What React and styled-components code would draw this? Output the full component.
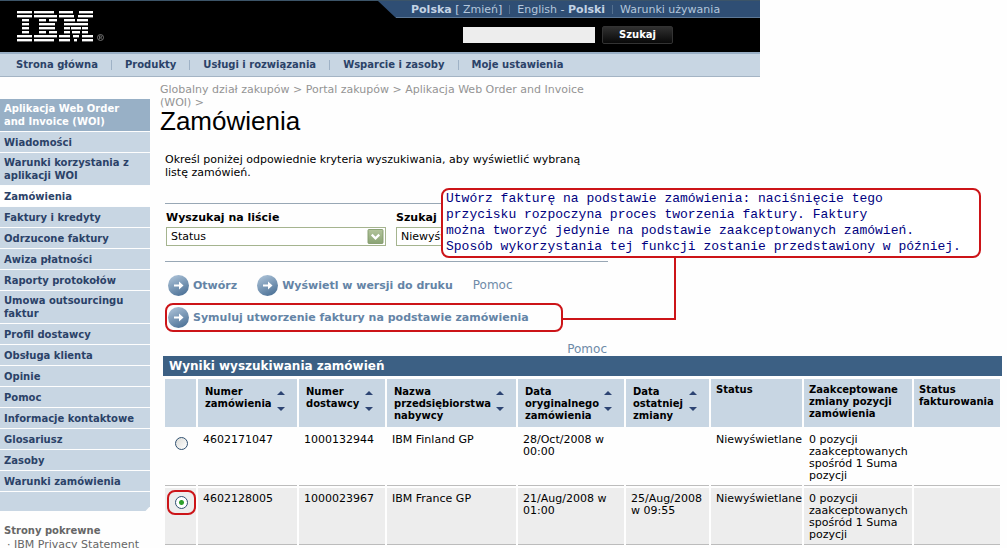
import React, { useState } from 'react';
import styled, { createGlobalStyle } from 'styled-components';

const navLinks = [
  'Strona główna',
  'Produkty',
  'Usługi i rozwiązania',
  'Wsparcie i zasoby',
  'Moje ustawienia',
];

const menuItems = [
  'Wiadomości',
  'Warunki korzystania z aplikacji WOI',
  'Zamówienia',
  'Faktury i kredyty',
  'Odrzucone faktury',
  'Awiza płatności',
  'Raporty protokołów',
  'Umowa outsourcingu faktur',
  'Profil dostawcy',
  'Obsługa klienta',
  'Opinie',
  'Pomoc',
  'Informacje kontaktowe',
  'Glosariusz',
  'Zasoby',
  'Warunki zamówienia',
];

const columns = [
  { width: 31, label: '' },
  { width: 99, label: 'Numer zamówienia', sortable: true },
  { width: 86, label: 'Numer dostawcy', sortable: true },
  { width: 129, label: 'Nazwa przedsiębiorstwa nabywcy', sortable: true },
  { width: 106, label: 'Data oryginalnego zamówienia', sortable: true },
  { width: 83, label: 'Data ostatniej zmiany', sortable: true },
  { width: 91, label: 'Status' },
  { width: 108, label: 'Zaakceptowane zmiany pozycji zamówienia' },
  { width: 86, label: 'Status fakturowania' },
];

const orders = [
  {
    id: '4602171047',
    supplier: '1000132944',
    buyer: 'IBM Finland GP',
    created: '28/Oct/2008 w 00:00',
    changed: '',
    status: 'Niewyświetlane',
    accepted: '0 pozycji zaakceptowanych spośród 1 Suma pozycji',
  },
  {
    id: '4602128005',
    supplier: '1000023967',
    buyer: 'IBM France GP',
    created: '21/Aug/2008 w 01:00',
    changed: '25/Aug/2008 w 09:55',
    status: 'Niewyświetlane',
    accepted: '0 pozycji zaakceptowanych spośród 1 Suma pozycji',
  },
];

// bars of the logo, one list of [x, width] per stripe
const logoStripes = [
  [[0, 15], [17, 20], [42, 14], [62, 14]],
  [[0, 15], [17, 23], [42, 15], [61, 15]],
  [[5, 7], [22, 7], [32, 8], [47, 11], [60, 11]],
  [[5, 7], [22, 16], [47, 24]],
  [[5, 7], [22, 16], [47, 6], [54, 10], [65, 6]],
  [[5, 7], [22, 7], [32, 8], [47, 6], [55, 8], [65, 6]],
  [[0, 15], [17, 23], [42, 11], [56, 6], [65, 11]],
  [[0, 15], [17, 20], [42, 11], [57, 3], [65, 11]],
];

function Logo() {
  return (
    <svg width="88" height="31" viewBox="0 0 88 31" role="img" aria-label="IBM">
      {logoStripes.map((bars, row) =>
        bars.map(([x, w]) => (
          <rect key={`${row}-${x}`} x={x} y={row * 4} width={w} height="2.4" fill="#fff" />
        ))
      )}
      <circle cx="83.5" cy="26.5" r="3" fill="none" stroke="#888" strokeWidth="0.8" />
      <path d="M82.5 28.3v-3.4h1.2a.9.9 0 0 1 0 1.9h-1.2m1.2 0 1 1.5" fill="none" stroke="#999" strokeWidth="0.6" />
    </svg>
  );
}

function ArrowIcon() {
  return (
    <svg width="21" height="21" viewBox="0 0 21 21" aria-hidden="true">
      <defs>
        <linearGradient id="ball" x1="0" y1="0" x2="0.5" y2="1">
          <stop offset="0" stopColor="#b3c8dc" />
          <stop offset="1" stopColor="#54789c" />
        </linearGradient>
      </defs>
      <circle cx="10.5" cy="10.5" r="10.5" fill="url(#ball)" />
      <path d="M6 9.5h5V6.5l4.5 4-4.5 4v-3H6z" fill="#fff" />
    </svg>
  );
}

function SortArrows() {
  return (
    <svg width="8" height="26" viewBox="0 0 8 26" aria-hidden="true">
      <path d="M0 9 4 5l4 4z" fill="#2d4473" />
      <path d="M0 21h8l-4 4z" fill="#2d4473" />
    </svg>
  );
}

function Dropdown({ id, label, options }) {
  return (
    <Field>
      <FieldLabel htmlFor={id}>{label}</FieldLabel>
      <SelectWrap>
        <Select id={id}>
          {options.map((o) => (
            <option key={o}>{o}</option>
          ))}
        </Select>
        <SelectArrow viewBox="0 0 17 16" aria-hidden="true">
          <defs>
            <linearGradient id="green" x1="0" y1="0" x2="0" y2="1">
              <stop offset="0" stopColor="#b3c49c" />
              <stop offset="1" stopColor="#8aa374" />
            </linearGradient>
          </defs>
          <rect x="0.5" y="0.5" width="16" height="15" rx="1" fill="url(#green)" stroke="#849c6e" />
          <path d="m4.5 6 4 4 4-4" fill="none" stroke="#fff" strokeWidth="2.4" />
        </SelectArrow>
      </SelectWrap>
    </Field>
  );
}

function App() {
  const [selected, setSelected] = useState('4602128005');

  return (
    <>
      <GlobalStyle />
      <Masthead>
        <TopRow>
          <Notch />
          <TopLinks>
            <span>
              <b>Polska</b> [ <TopLink href="#">Zmień</TopLink>]
            </span>
            <TopDivider />
            <span>
              <TopLink href="#">English</TopLink> - <b>Polski</b>
            </span>
            <TopDivider />
            <TopLink href="#">Warunki używania</TopLink>
          </TopLinks>
        </TopRow>
        <BrandRow>
          <Logo />
          <SearchForm>
            <SearchInput aria-label="Szukaj" />
            <SearchButton type="button">Szukaj</SearchButton>
          </SearchForm>
        </BrandRow>
        <Nav>
          {navLinks.map((link) => (
            <NavLink href="#" key={link}>{link}</NavLink>
          ))}
        </Nav>
      </Masthead>

      <Layout>
        <Sidebar>
          <MenuTitle>Aplikacja Web Order and Invoice (WOI)</MenuTitle>
          {menuItems.map((item) => (
            <MenuLink href="#" key={item} $active={item === 'Zamówienia'}>{item}</MenuLink>
          ))}
          <MenuEnd />
          <Related>
            <RelatedTitle>Strony pokrewne</RelatedTitle>
            <RelatedLink href="#">IBM Privacy Statement</RelatedLink>
          </Related>
        </Sidebar>

        <Content>
          <Breadcrumbs>
            <a href="#">Globalny dział zakupów</a> &gt; <a href="#">Portal zakupów</a> &gt;{' '}
            <a href="#">Aplikacja Web Order and Invoice (WOI)</a> &gt;
          </Breadcrumbs>
          <Title>Zamówienia</Title>
          <Intro>
            Określ poniżej odpowiednie kryteria wyszukiwania, aby wyświetlić wybraną listę zamówień.
          </Intro>

          <Filters>
            <Dropdown id="list" label="Wyszukaj na liście" options={['Status']} />
            <Dropdown id="value" label="Szukaj" options={['Niewyświetlane']} />
            <Callout>
              Utwórz fakturę na podstawie zamówienia: naciśnięcie tego<br />
              przycisku rozpoczyna proces tworzenia faktury. Faktury<br />
              można tworzyć jedynie na podstawie zaakceptowanych zamówień.<br />
              Sposób wykorzystania tej funkcji zostanie przedstawiony w później.
            </Callout>
          </Filters>

          <Actions>
            <ActionRow>
              <Action type="button"><ArrowIcon />Otwórz</Action>
              <Action type="button"><ArrowIcon />Wyświetl w wersji do druku</Action>
              <HelpLink href="#">Pomoc</HelpLink>
            </ActionRow>
            <MarkedRow>
              <Action type="button">
                <ArrowIcon />Symuluj utworzenie faktury na podstawie zamówienia
              </Action>
            </MarkedRow>
          </Actions>

          <HelpRow>
            <HelpLink href="#">Pomoc</HelpLink>
          </HelpRow>
          <Results>
            <ResultsTitle id="results-title">Wyniki wyszukiwania zamówień</ResultsTitle>
            <Table aria-labelledby="results-title">
              <colgroup>
                {columns.map((c) => (
                  <col key={c.label} width={c.width} />
                ))}
              </colgroup>
              <thead>
                <tr>
                  {columns.map((c) => (
                    <Th key={c.label} $sortable={c.sortable}>
                      {c.sortable ? (
                        <SortHead>
                          {c.label}
                          <SortArrows />
                        </SortHead>
                      ) : (
                        c.label
                      )}
                    </Th>
                  ))}
                </tr>
              </thead>
              <tbody>
                {orders.map((o, i) => (
                  <Row key={o.id} $shaded={i % 2 === 1}>
                    <PickCell>
                      <RadioMark $marked={o.id === '4602128005'}>
                        <Radio
                          type="radio"
                          name="order"
                          aria-label={o.id}
                          checked={selected === o.id}
                          onChange={() => setSelected(o.id)}
                        />
                      </RadioMark>
                    </PickCell>
                    <Td>{o.id}</Td>
                    <Td>{o.supplier}</Td>
                    <Td>{o.buyer}</Td>
                    <Td>{o.created}</Td>
                    <Td>{o.changed}</Td>
                    <Td>{o.status}</Td>
                    <Td>{o.accepted}</Td>
                    <Td />
                  </Row>
                ))}
              </tbody>
            </Table>
          </Results>
        </Content>
      </Layout>
    </>
  );
}

export default App;

const GlobalStyle = createGlobalStyle`
  * {
    box-sizing: border-box;
  }
  body {
    margin: 0;
    background: #fefefe;
    color: #000;
    font: 11px/13px Verdana, "DejaVu Sans", sans-serif;
  }
  a {
    color: inherit;
    text-decoration: none;
  }
  svg {
    flex: none;
  }
`;

const Masthead = styled.header`
  max-width: 760px;
  background: #000;
  border-top: 1px solid #3c5468;
`;

const TopRow = styled.div`
  display: flex;
  justify-content: flex-end;
  height: 17px;
`;

const Notch = styled.div`
  width: 18px;
  background: #2f4e74;
  clip-path: polygon(0 0, 100% 0, 100% 100%);
`;

const TopLinks = styled.div`
  display: flex;
  align-items: center;
  width: 364px;
  padding-left: 15px;
  background: #2f4e74;
  border-bottom: 1px solid #5d7896;
  color: #c3d3e4;
`;

const TopLink = styled.a`
  color: #b4c7dc;
`;

const TopDivider = styled.i`
  width: 1px;
  height: 9px;
  margin: 0 7px;
  background: #54708f;
`;

const BrandRow = styled.div`
  display: flex;
  justify-content: space-between;
  height: 34px;
  padding: 0 87px 0 17px;

  > svg {
    margin-top: -7px;
  }
`;

const SearchForm = styled.form`
  display: flex;
  align-items: center;
  gap: 7px;
`;

const SearchInput = styled.input`
  width: 132px;
  height: 16px;
  padding: 0 2px;
  border: 0;
  background: #ededed;
`;

const SearchButton = styled.button`
  width: 71px;
  height: 18px;
  padding: 0;
  border: 1px solid #333;
  border-radius: 2px;
  background: linear-gradient(#303030, #080808);
  color: #fff;
  font: bold 10px/14px Verdana, "DejaVu Sans", sans-serif;
`;

const Nav = styled.nav`
  display: flex;
  align-items: center;
  height: 25px;
  padding-left: 3px;
  background: #c8d6e3;
  border-top: 2px solid #99afc5;
  border-bottom: 1px solid #a4b4c4;
`;

const NavLink = styled.a`
  padding: 0 13px;
  color: #2b4268;
  font-size: 10px;
  font-weight: bold;
  line-height: 10px;

  & + & {
    border-left: 1px solid #9fb2c6;
  }
`;

const Layout = styled.div`
  display: flex;
  gap: 10px;
`;

const Sidebar = styled.aside`
  display: flex;
  flex: none;
  flex-direction: column;
  gap: 1px;
  width: 150px;
  margin-top: 22px;
`;

const MenuTitle = styled.h2`
  margin: 0;
  padding: 3px 20px 3px 4px;
  background: #98b0c6;
  color: #fff;
  font-size: 10px;
  line-height: 13px;
`;

const MenuLink = styled.a`
  display: flex;
  align-items: center;
  min-height: 20px;
  padding: 3px 4px;
  background: ${({ $active }) => ($active ? '#fff' : '#c8d6e3')};
  color: #2b4268;
  font-size: 10px;
  font-weight: bold;
`;

const MenuEnd = styled.div`
  height: 19px;
  background: #c8d6e3;
  clip-path: polygon(0 0, 100% 0, 100% 75%, 97% 100%, 0 100%);
`;

const Related = styled.div`
  display: flex;
  flex-direction: column;
  gap: 1px;
  padding: 12px 4px 0;
  color: #666;
`;

const RelatedTitle = styled.h3`
  margin: 0;
  font-size: 10px;
`;

const RelatedLink = styled.a`
  padding-left: 3px;
  white-space: nowrap;

  &::before {
    content: '· ';
  }
`;

const Content = styled.main`
  flex: 1;
  min-width: 0;
  padding: 6px 5px 0 0;
`;

const Breadcrumbs = styled.nav`
  max-width: 440px;
  color: #949494;
`;

const Title = styled.h1`
  margin: 0;
  font: 26px/24px Arial, "Liberation Sans", sans-serif;
`;

const Intro = styled.p`
  max-width: 440px;
  margin: 20px 0 0 5px;
`;

const Filters = styled.section`
  position: relative;
  display: flex;
  gap: 10px;
  max-width: 443px;
  height: 59px;
  margin: 24px 0 0 5px;
  padding: 7px 0 0 1px;
  border: solid #98a7b5;
  border-width: 1px 0;
`;

const Field = styled.div`
  flex: none;
  width: 220px;

  & + & {
    width: 200px;
  }
`;

const FieldLabel = styled.label`
  display: block;
  margin-bottom: 3px;
  font-weight: bold;
`;

const SelectWrap = styled.div`
  position: relative;
`;

const Select = styled.select`
  display: block;
  appearance: none;
  width: 100%;
  height: 19px;
  padding: 0 4px;
  border: 1px solid #a5b48f;
  border-radius: 0;
  background: #fff;
  color: #000;
  font: 11px/17px Verdana, "DejaVu Sans", sans-serif;
`;

const SelectArrow = styled.svg`
  position: absolute;
  top: 2px;
  right: 2px;
  width: 17px;
  height: 15px;
  pointer-events: none;
`;

const Callout = styled.div`
  position: absolute;
  top: -16px;
  left: 276px;
  width: 540px;
  padding: 1px 3px;
  border: 2px solid #cc1418;
  border-radius: 8px;
  background: #fff;
  color: #000080;
  font: 13px/16px "Courier New", "Liberation Mono", monospace;
  white-space: nowrap;

  &::after {
    content: '';
    position: absolute;
    top: 100%;
    left: 120px;
    width: 111px;
    height: 62px;
    border: solid #cc1418;
    border-width: 0 2px 2px 0;
  }
`;

const Actions = styled.section`
  display: flex;
  flex-direction: column;
  align-items: flex-start;
  margin: 13px 0 0 5px;
`;

const ActionRow = styled.div`
  display: flex;
  align-items: center;
  gap: 20px;
  padding-left: 3px;
`;

const MarkedRow = styled.div`
  width: 398px;
  margin-top: 7px;
  padding: 2px 1px;
  border: 2px solid #cc1418;
  border-radius: 8px;
`;

const Action = styled.button`
  display: flex;
  align-items: center;
  gap: 4px;
  padding: 0;
  border: 0;
  background: none;
  color: #6484a6;
  font: bold 11px/21px Verdana, "DejaVu Sans", sans-serif;
  white-space: nowrap;
`;

const HelpLink = styled.a`
  color: #6f8ba8;
  font-size: 12px;
`;

const HelpRow = styled.div`
  max-width: 447px;
  margin-top: 11px;
  text-align: right;
`;

const Results = styled.section`
  margin-left: 3px;
`;

const ResultsTitle = styled.h2`
  margin: 0;
  padding: 0 6px;
  background: #3c6084;
  color: #fff;
  font-size: 12px;
  line-height: 20px;
`;

const Table = styled.table`
  width: 100%;
  margin-top: 1px;
  table-layout: fixed;
  border-spacing: 2px;
  line-height: 12px;
`;

const Th = styled.th`
  height: 48px;
  padding: ${({ $sortable }) => ($sortable ? '7px 12px 0 7px' : '5px 0 0 5px')};
  background: #c8d6e3;
  font-size: 10px;
  text-align: left;
  vertical-align: top;
`;

const SortHead = styled.div`
  display: flex;
  justify-content: space-between;
`;

const Td = styled.td`
  padding: 5px 0 3px 5px;
  border-bottom: 1px solid #bcbcbc;
  vertical-align: top;
`;

const PickCell = styled(Td)`
  padding: 2px 0 0;
`;

const Row = styled.tr`
  background: ${({ $shaded }) => ($shaded ? '#ededed' : '#fefefe')};
`;

const RadioMark = styled.span`
  display: flex;
  align-items: center;
  justify-content: center;
  height: 25px;
  margin: 0 0 0 2px;
  border: 2px solid ${({ $marked }) => ($marked ? '#cc1418' : 'transparent')};
  border-radius: 8px;
`;

const Radio = styled.input`
  appearance: none;
  width: 13px;
  height: 13px;
  margin: 0;
  border: 1px solid #2f5070;
  border-radius: 50%;
  background: linear-gradient(135deg, #dcdcd8, #fff);

  &:checked {
    background: radial-gradient(circle, #2fa02c 0 2px, #fff 3px);
  }
`;
